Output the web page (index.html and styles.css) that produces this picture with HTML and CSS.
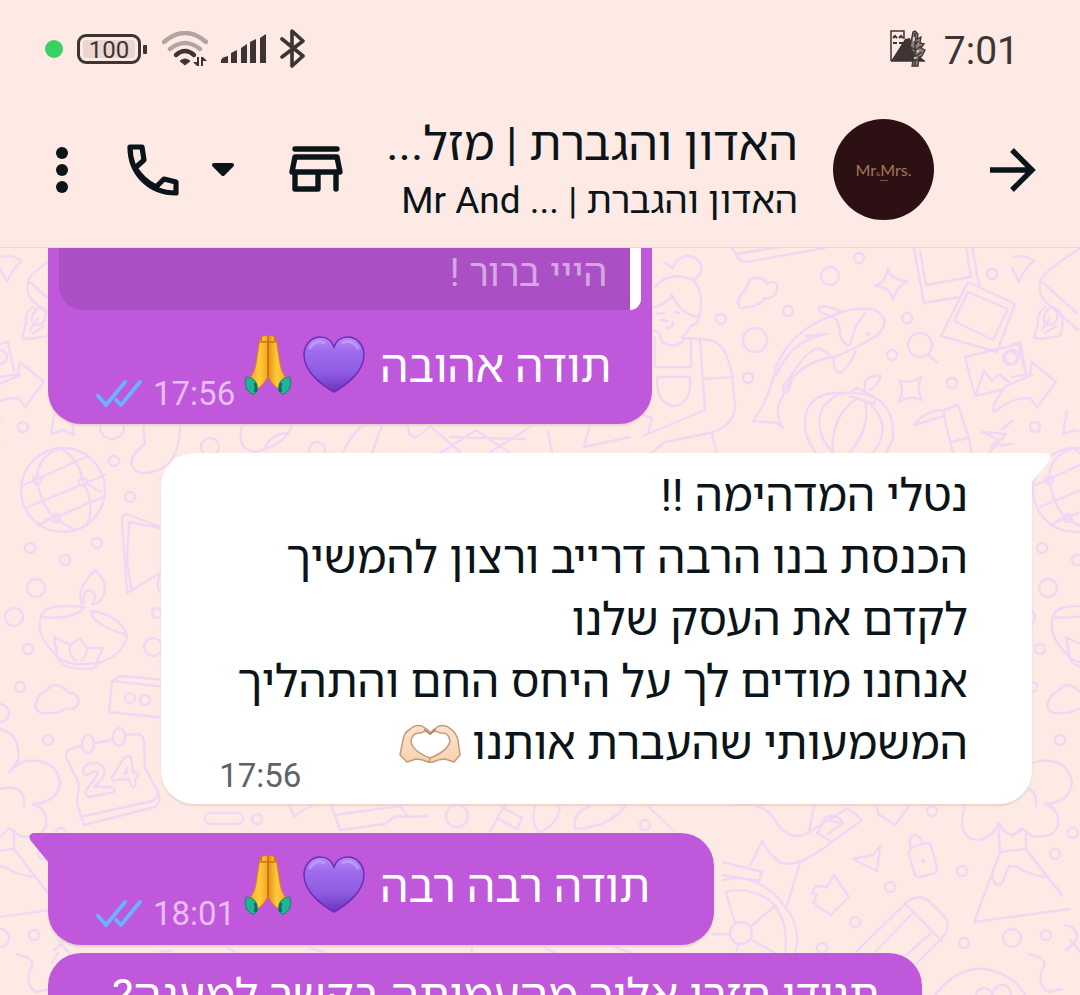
FILE: index.html
```html
<!DOCTYPE html>
<html lang="he" dir="rtl">
<head>
<meta charset="utf-8">
<meta name="viewport" content="width=device-width, initial-scale=1">
<title>האדון והגברת</title>
<link rel="stylesheet" href="styles.css">
</head>
<body>
<svg class="defs" width="0" height="0" aria-hidden="true">
  <defs>
    <linearGradient id="heartFill" x1="0" y1="0" x2="0" y2="1">
      <stop offset="0" stop-color="#b78af6"/><stop offset=".25" stop-color="#a06ced"/><stop offset=".65" stop-color="#8f5be3"/><stop offset="1" stop-color="#6a35b8"/>
    </linearGradient>
    <linearGradient id="palmL" x1="0" y1="0" x2="1" y2="0">
      <stop offset="0" stop-color="#f29d1f"/><stop offset=".55" stop-color="#ffcd3a"/><stop offset="1" stop-color="#f5a623"/>
    </linearGradient>
    <linearGradient id="palmR" x1="1" y1="0" x2="0" y2="0">
      <stop offset="0" stop-color="#f29d1f"/><stop offset=".55" stop-color="#ffcd3a"/><stop offset="1" stop-color="#e58e17"/>
    </linearGradient>
    <linearGradient id="skin" x1="0" y1="0" x2="0" y2="1">
      <stop offset="0" stop-color="#fbe3cf"/><stop offset="1" stop-color="#f8d3ae"/>
    </linearGradient>
    <symbol id="heart" viewBox="0 0 62 62">
      <path d="M31 58C24 54 1 40 1 21C1 10 9 3 17 3C24 3 29 7 31 13C33 7 38 3 45 3C53 3 61 10 61 21C61 40 38 54 31 58Z" fill="url(#heartFill)" stroke="#6d2db8" stroke-width="1.5"/>
      <path d="M7 14C10 8 16 6 21 9M40 9C45 6 52 8 55 14" fill="none" stroke="#d2b4fb" stroke-width="3" stroke-linecap="round" opacity=".5"/>
    </symbol>
    <symbol id="pray" viewBox="0 0 62 62">
      <path d="M31 3L31 42C29 47 25 52 19 56L11 46C16 41 18 36 19 29L23 5Q27-1 31 3Z" fill="url(#palmL)" stroke="#d9820f"/>
      <path d="M31 3L31 42C33 47 37 52 43 56L51 46C46 41 44 36 43 29L39 5Q35-1 31 3Z" fill="url(#palmR)" stroke="#d9820f"/>
      <path d="M24 8H38M24 3V8M38 3V8M31 3V42" fill="none" stroke="#c9700b" stroke-width="1.5"/>
      <path d="M9 43Q15 43 18 47Q21 53 20 57Q18 61 15 60L10 56Q7 49 9 43Z" fill="#22b496" stroke="#14806f"/>
      <path d="M53 43Q47 43 44 47Q41 53 42 57Q44 61 47 60L52 56Q55 49 53 43Z" fill="#22b496" stroke="#14806f"/>
      <path d="M18 49Q20 53 18 58M44 49Q42 53 44 58" fill="none" stroke="#0d6f63" stroke-width="3"/>
    </symbol>
    <symbol id="hands" viewBox="0 0 62 40">
      <path d="M32 10Q27 5 22 9Q13 8 12 17Q13 27 31 34L33 38L29 38Q23 35 17 35L8 38L1 31L4 16Q5 9 10 6Q16 0 23 2L29 6L32 10Z" fill="url(#skin)" stroke="#c59a7c" stroke-width="1.5" stroke-linejoin="round"/>
      <path d="M31 10Q36 5 41 9Q50 8 51 17Q49 27 31 34L30 38L34 38Q40 35 46 35L55 38L61 31L59 16Q57 9 53 6Q47 0 40 2L34 6L31 10Z" fill="url(#skin)" stroke="#c59a7c" stroke-width="1.5" stroke-linejoin="round"/>
      <path d="M25 5L31 10L37 5" fill="none" stroke="#b67f61" stroke-width="1.5"/>
    </symbol>
    <symbol id="ticks" viewBox="0 0 46 30">
      <path d="M2 17L10 26L29 3M20 21L25 26L44 3" fill="none" stroke="#69b4fd" stroke-width="3.8" stroke-linecap="round" stroke-linejoin="round"/>
    </symbol>
  </defs>
</svg>

<div class="screen">
  <header class="top">
    <div class="status">
      <span class="clock">7:01</span>
      <svg class="note" width="36" height="40" viewBox="0 0 36 40" aria-hidden="true">
        <path d="M1 32V2H14V10M1 32H35" fill="none" stroke="#3d3433" stroke-width="1.5"/>
        <path d="M1 32L15 10L20 9L24 22L35 32Z" fill="#3d3433"/>
        <path d="M3 9L5 7L7 9M9 9L11 7L13 9M3 14H7M9 14H13" fill="none" stroke="#3d3433" stroke-width="2"/>
        <path d="M25 2L28 5L27 10L31 8L30 14L34 15L31 19L35 21L32 27L29 28L28 37H22L24 25L20 18L22 8L23 3Z" fill="#8d8080" stroke="#3d3433" stroke-width="1.3"/>
        <path d="M25 4V36M28 12L25 16M31 17L26 21M32 23L26 27M21 18L25 21M23 31H28" fill="none" stroke="#3d3433" stroke-width="1.5"/>
        <path d="M24 8V12M28 21V23M24 29H26" stroke="#feeae4" stroke-width="1.5"/>
      </svg>
      <span class="push"></span>
      <svg width="26" height="40" viewBox="0 0 26 40" aria-hidden="true"><path d="M2 10L23 27L12 37V2L23 12L2 28" fill="none" stroke="#3d3433" stroke-width="3.6" stroke-linejoin="round" stroke-linecap="round"/></svg>
      <svg class="signal" width="46" height="30" viewBox="0 0 46 30" aria-hidden="true"><path d="M0 29V26Q1 23 7 22V29ZM10 29V19L16 16V29ZM20 29V14L26 10V29ZM29 29V8L35 5V29ZM39 29V4L45 0V29Z" fill="#3d3433"/></svg>
      <svg class="wifi" width="46" height="36" viewBox="0 0 46 36" aria-hidden="true">
        <path d="M2 11Q23-7 44 11M8 18Q23 6 38 18" fill="none" stroke="#b3a4a1" stroke-width="4.4" stroke-linecap="round"/>
        <path d="M14 24Q23 16 32 24" fill="none" stroke="#3d3433" stroke-width="4.4" stroke-linecap="round"/>
        <path d="M18 30Q23 26 28 30L23 34Z" fill="#3d3433" stroke="#3d3433" stroke-linejoin="round"/>
        <path d="M35 26V31H31L35 35H37V26ZM39 35V26H41L45 30H41V35Z" fill="#3d3433"/>
      </svg>
      <span class="battery">100</span>
      <span class="live"></span>
    </div>
    <div class="bar">
      <button class="icon back" type="button" aria-label="חזרה"><svg width="46" height="46" viewBox="0 0 46 46"><path d="M0 23H42M22 3L42 23L22 43" fill="none" stroke="#0b1418" stroke-width="5.4"/></svg></button>
      <div class="avatar"><span>Mr<small>&amp;</small>Mrs.</span><i></i></div>
      <div class="names">
        <h1>האדון והגברת | מזל...</h1>
        <p>האדון והגברת | <bdi dir="ltr">Mr And ...</bdi></p>
      </div>
      <button class="icon store" type="button" aria-label="חנות"><svg width="54" height="48" viewBox="0 0 54 48"><path d="M6 3H48M6 11H48L51 26H3ZM6 26V43H29V26M47 26V43" fill="none" stroke="#0b1418" stroke-width="5.4" stroke-linejoin="round" stroke-linecap="round"/></svg></button>
      <button class="icon call" type="button" aria-label="שיחה">
        <svg width="52" height="52" viewBox="0 0 52 52"><path d="M3 3H15L17 16L8 24C13 32 20 39 29 43L37 35L49 38V49C22 49 3 29 3 3Z" fill="none" stroke="#0b1418" stroke-width="5.2" stroke-linejoin="round"/></svg>
        <svg width="24" height="16" viewBox="0 0 24 16"><path d="M3 3H21L12 12Z" fill="#0b1418" stroke="#0b1418" stroke-width="4" stroke-linejoin="round"/></svg>
      </button>
      <button class="icon" type="button" aria-label="תפריט"><svg width="12" height="46" viewBox="0 0 12 46"><g fill="#0b1418"><circle cx="6" cy="6" r="6"/><circle cx="6" cy="23" r="6"/><circle cx="6" cy="40" r="6"/></g></svg></button>
    </div>
  </header>

  <main class="chat">
    <svg class="doodles" aria-hidden="true">
      <defs>
        <g id="edge">
          <circle cx="63" cy="490" r="42"/>
          <path d="M24 485L88 456M28 507L105 475M38 525L103 497M62 448Q36 455 37 482Q43 508 54 518L75 530M62 448Q80 462 83 482Q96 505 87 526M55 516Q48 518 39 526M88 484L101 492"/>
          <circle cx="37" cy="480" r="4"/><circle cx="83" cy="482" r="4"/><circle cx="56" cy="518" r="4"/>
          <circle cx="30" cy="548" r="5"/><circle cx="65" cy="560" r="5"/><circle cx="97" cy="543" r="5"/><circle cx="36" cy="588" r="9"/><circle cx="14" cy="617" r="9"/><circle cx="28" cy="649" r="5"/><circle cx="20" cy="687" r="5"/><circle cx="48" cy="740" r="5"/><circle cx="0" cy="713" r="9"/>
          <path d="M84 607Q76 620 41 617Q35 635 55 654Q65 668 98 663Q125 655 127 635Q118 614 91 611M41 617Q42 603 84 607M91 611Q92 625 127 635M57 657Q61 670 92 669L97 664M57 655L54 637L70 645L80 638L87 648L103 648L97 661M70 645Q68 655 76 661M87 648Q86 658 81 661M82 604Q75 590 95 570Q109 583 103 597Q99 604 92 604M84 602Q82 591 90 590Q98 593 93 604"/>
          <path d="M42 713Q30 709 40 695Q47 690 48 689Q53 681 65 689Q68 694 73 693Q84 700 74 709Q66 707 62 711Q53 714 42 713Z"/>
          <path d="M0 729Q21 734 18 760L9 773Q20 758 38 761Q58 763 60 784Q56 803 33 804Q48 809 46 825Q42 839 20 836M0 789Q26 783 24 806M20 836L9 828L0 837M14 830V849L49 895M-14 823L-12 852L14 849M-12 852L-38 922L58 909M14 849L50 895M-20 874Q-18 889-10 883L-3 866L5 867Q15 874 32 877"/>
          <circle cx="0" cy="938" r="9"/><circle cx="34" cy="935" r="5"/><circle cx="43" cy="854" r="5"/><circle cx="61" cy="833" r="5"/>
          <path d="M17 954L29 958Q35 964 30 970Q25 985 36 992L50 989M53 925Q66 927 65 939L55 950M58 940L67 950M54 950L62 944L71 956"/>
          <path d="M2 257Q12 254 22 261Q13 267 7 282L0 268M70 247Q26 275 28 283Q26 295 34 302L66 330M30 282L65 313M34 307Q25 311 26 323L22 338L29 339L48 336Q55 315 43 308Q38 306 34 312Q28 323 37 325Q47 323 45 315M30 330L38 318M33 333L44 326"/>
          <path d="M0 344L8 342L14 371M0 377L18 374L20 362L44 382L25 407L18 398Q0 397-18 412Q-22 407-6 386L20 375"/>
          <circle cx="0" cy="357" r="7"/><circle cx="23" cy="427" r="5"/><path d="M55 411L51 434L63 430L74 435L70 412M0 421L-10 429M0 444L-21 446L-13 440L-30 432L-6 434L-25 455"/>
        </g>
      </defs>
      <g class="ink" transform="translate(0 -248)">
        <use href="#edge"/><use href="#edge" x="1012"/>
        <path d="M143 424L145 444Q129 455 132 466Q137 476 152 472Q180 467 180 424M242 425Q236 450 255 452Q287 444 292 425M265 450Q268 434 288 433M343 453Q350 435 364 424M372 453L382 425M408 426Q410 448 430 426M440 453L476 430L510 453M450 437L525 439M430 426L460 452M490 452L535 424M548 432L552 452M590 424L584 447L630 437"/>
        <circle cx="112" cy="427" r="12"/><circle cx="114" cy="461" r="5"/><circle cx="210" cy="447" r="9"/><circle cx="317" cy="450" r="8"/><circle cx="130" cy="497" r="5"/>
        <path d="M165 529L127 514Q122 514 122 520L127 593L165 570M129 522L165 529M129 522L127 560L131 588M160 573Q155 590 162 594M165 680L120 676L112 681L109 712L165 718M112 681L165 687"/>
        <circle cx="130" cy="698" r="5"/><circle cx="145" cy="700" r="5"/><circle cx="157" cy="613" r="5"/><circle cx="153" cy="647" r="9"/>
        <path d="M82 746L70 749Q65 752 66 757L79 784M95 743L112 740M125 735L139 734Q144 736 144 743L145 768M79 784L77 803L84 825L155 807Q161 802 159 794L145 768M80 817L152 801Q158 798 158 791"/>
        <ellipse cx="88" cy="744" rx="6" ry="9"/><ellipse cx="119" cy="737" rx="6" ry="9"/>
        <path d="M83 773Q83 763 94 763Q110 765 102 779L94 787H113Q118 792 109 793L89 797Q83 794 87 789L98 774Q96 769 91 773Q86 777 83 773ZM124 758L112 777Q110 782 117 780L129 779L131 786Q137 790 135 778Q142 775 135 772L133 773L131 757Q126 755 124 758M124 774L127 768V773Z"/>
        <rect x="205" y="813" width="38" height="11" rx="5"/><circle cx="257" cy="819" r="5"/>
        <path d="M290 806L294 817L303 810L312 806M331 806L335 815L400 806M335 815L340 830L385 824Q396 813 405 817L427 816M400 806L407 815"/>
        <circle cx="457" cy="816" r="11"/><path d="M505 806L497 818L517 829L522 818L502 807M498 818L490 832M535 806Q530 823 540 833Q559 822 560 806M575 829Q572 812 590 806M575 829Q610 827 625 806M648 806L675 832"/><circle cx="645" cy="825" r="5"/>
        <path d="M655 287Q669 270 693 280Q702 289 701 306L699 318Q698 324 691 326Q687 333 682 337L684 340Q675 350 662 342L659 333L653 330M694 280Q708 269 696 258Q680 251 673 268L664 262M652 308Q669 303 672 295Q680 313 697 317M656 314L664 313M675 312L679 313M661 320L667 321M667 328Q673 328 673 322M655 337V367H691V338M700 338L705 410L643 436M685 338L710 340Q726 343 732 375L735 407Q734 426 710 433L665 442L650 454M704 379L733 377M657 377H690Q692 405 673 406Q656 403 657 377M712 434L717 454M640 414L652 418L648 433"/>
        <path d="M731 247L740 260Q743 263 752 261L825 248M736 254L780 247M740 308Q735 300 744 292L750 279Q763 275 767 284Q779 278 777 291Q774 299 765 298Q760 306 749 307Z"/>
        <circle cx="859" cy="258" r="5"/><circle cx="830" cy="276" r="9"/><circle cx="721" cy="319" r="5"/><circle cx="788" cy="311" r="5"/><circle cx="755" cy="340" r="12"/><circle cx="748" cy="378" r="5"/><circle cx="892" cy="355" r="5"/><circle cx="907" cy="318" r="5"/><circle cx="992" cy="274" r="5"/><circle cx="952" cy="383" r="5"/>
        <path d="M888 268Q890 280 907 281Q896 288 893 300Q890 286 875 286Q887 281 888 268ZM899 380Q910 385 921 377Q916 389 922 400Q911 395 899 402Q905 390 899 380Z"/>
        <path d="M832 316Q855 305 875 310Q894 321 875 337Q840 357 828 358Q793 365 782 398Q773 410 783 428L777 423L753 421Q768 402 776 367Q791 330 832 316M834 316Q817 314 819 307Q827 305 842 312M776 376Q790 340 827 334L805 336M832 316Q840 320 840 335Q844 346 850 345L855 328L865 313M791 376Q807 350 819 348L830 355M791 376Q780 388 784 392Q790 395 792 374M834 357Q832 371 840 373Q848 369 856 351"/><circle cx="868" cy="334" r="1"/>
        <path d="M817 454Q800 434 807 410Q815 391 847 393Q895 391 893 438L886 454M833 453Q812 430 823 407Q833 394 847 393M833 454Q830 417 856 399M848 454Q871 430 865 400M868 402Q895 426 872 454M850 393L857 388L875 397L874 404L850 396M865 390Q862 376 880 375Q882 381 870 390"/>
        <path d="M914 248L924 303L960 297M972 247L979 285M920 251L926 285L971 277L966 248M968 282L1015 304L997 352L941 336ZM968 292L1008 309L993 340L954 321ZM965 357L1018 344L1026 375M965 357L975 396L1001 390M976 394L984 371L992 381L999 374L1010 383"/><circle cx="1010" cy="358" r="7"/><circle cx="920" cy="345" r="12"/><path d="M929 355L937 363M914 425Q925 410 944 410L958 405L969 438L972 454M914 425L944 416L953 453M944 410V416M951 442L968 438"/>
        <path d="M735 805Q766 801 777 824Q792 843 809 832L848 808L862 820L832 842L817 833L825 820L843 823L828 834M809 832L814 806M832 842Q796 870 779 862Q766 850 762 841L750 866M800 863L787 905M824 819Q833 811 843 822M723 862L762 872L759 881L723 875M723 880Q762 870 791 915Q801 935 795 953M725 892Q746 886 768 899Q790 918 785 953M726 893L735 923M750 927L776 905M752 940L775 953M738 945L736 953M713 934H730"/><circle cx="741" cy="933" r="11"/>
        <path d="M877 806L878 814L895 825L909 806M853 859L873 855L880 846L877 871ZM812 893L815 886L827 887L834 875L849 897L831 915L820 908L813 902L817 895ZM856 952L908 901Q920 893 930 902L945 917Q950 925 945 935L914 966M904 903L942 941M912 914L875 952M930 934L903 958"/><path d="M909 855Q907 849 915 846L926 843Q931 843 932 849L937 868Q938 873 932 874L920 877Q915 877 914 872ZM911 850Q907 838 914 835Q922 835 922 844"/><circle cx="923" cy="861" r="1"/><circle cx="932" cy="811" r="5"/><circle cx="890" cy="887" r="5"/><circle cx="962" cy="871" r="5"/><circle cx="855" cy="922" r="5"/><circle cx="964" cy="943" r="5"/><circle cx="822" cy="948" r="5"/>
        <path d="M965 806Q955 840 980 840Q994 836 999 823Q1007 842 1023 829M935 995Q960 963 990 970Q1015 976 1025 995"/><circle cx="984" cy="996" r="8"/><circle cx="1002" cy="994" r="9"/>
        <path d="M58 953L52 963M160 952L170 951M224 945L236 953M310 948L325 953M472 947V954M540 945L555 953M610 945L632 953"/>
      </g>
    </svg>

    <article class="msg out first">
      <blockquote class="quote">הייי ברור !</blockquote>
      <div class="line">
        <p>תודה אהובה</p>
        <span class="emoji"><svg role="img" aria-label="💜"><use href="#heart"/></svg><svg role="img" aria-label="🙏"><use href="#pray"/></svg></span>
        <span class="meta"><time>17:56</time><svg class="ticks" role="img" aria-label="נקרא"><use href="#ticks"/></svg></span>
      </div>
    </article>

    <article class="msg in">
      <svg class="tail" width="20" height="32" viewBox="0 0 20 32" aria-hidden="true"><path d="M0 0H16Q22 2 18 8L0 30Z" fill="#fff"/></svg>
      <p>נטלי המדהימה !!<br>הכנסת בנו הרבה דרייב ורצון להמשיך<br>לקדם את העסק שלנו<br>אנחנו מודים לך על היחס החם והתהליך<br>המשמעותי שהעברת אותנו <svg class="hands" role="img" aria-label="🫶🏻"><use href="#hands"/></svg></p>
      <time>17:56</time>
    </article>

    <article class="msg out tailed">
      <svg class="tail" width="20" height="32" viewBox="0 0 20 32" aria-hidden="true"><path d="M20 0H4Q-2 2 2 8L20 30Z" fill="#c058dc"/></svg>
      <div class="line">
        <p>תודה רבה רבה</p>
        <span class="emoji"><svg role="img" aria-label="💜"><use href="#heart"/></svg><svg role="img" aria-label="🙏"><use href="#pray"/></svg></span>
        <span class="meta"><time>18:01</time><svg class="ticks" role="img" aria-label="נקרא"><use href="#ticks"/></svg></span>
      </div>
    </article>

    <article class="msg out last">
      <p>תגידו חזרו אליך מהעמותה בקשר למענה?</p>
    </article>
  </main>
</div>
</body>
</html>
```
FILE: styles.css
```css
* { box-sizing: border-box; }
body {
  margin: 0;
  background: #feeae4;
  color: #0b1418;
  font-family: Roboto, "Noto Sans Hebrew", "Open Sans", sans-serif;
}
svg { display: block; flex: none; }
h1, p, blockquote { margin: 0; font-weight: 400; }
.defs { position: absolute; }
.screen { height: 100vh; display: flex; flex-direction: column; overflow: hidden; }

.top { flex: none; border-bottom: 1px solid #ecd9d2; background: #feeae4; }
.status {
  display: flex;
  align-items: center;
  height: 98px;
  padding: 0 61px 0 45px;
  color: #3d3433;
}
.clock { padding-top: 4px; font-size: 39px; }
.note { margin-right: 18px; }
.push { flex: 1; }
.signal { margin-right: 13px; }
.wifi { margin-right: 13px; }
.battery {
  position: relative;
  width: 64px;
  height: 30px;
  margin: 0 21px 0 14px;
  border: 3px solid #3d3433;
  border-radius: 9px;
  background: #ead7d3;
  box-shadow: inset 0 0 0 3px #feeae4;
  font-size: 24px;
  line-height: 26px;
  text-align: center;
}
.battery::after {
  content: "";
  position: absolute;
  left: 63px;
  top: 8px;
  width: 4px;
  height: 9px;
  border-radius: 1px;
  background: #3d3433;
}
.live { width: 18px; height: 18px; border-radius: 50%; background: #38d163; }

.bar { display: flex; align-items: center; height: 149px; padding: 0 44px 6px 56px; }
.icon { display: flex; align-items: center; padding: 0; border: 0; background: none; }
.avatar {
  position: relative;
  display: grid;
  place-items: center;
  flex: none;
  width: 101px;
  height: 101px;
  margin: 0 56px 0 35px;
  border-radius: 50%;
  background: #2d1013;
  color: #a17a57;
  direction: ltr;
  font: 16px Lato, sans-serif;
}
.avatar small { font-size: 6px; }
.avatar i { position: absolute; top: 61px; width: 8px; height: 1px; background: #765741; }
.names { flex: 1; min-width: 0; padding-top: 4px; white-space: nowrap; }
.names h1 { font-size: 47px; line-height: 59px; }
.names p { font-size: 37px; line-height: 56px; }
.store { margin-left: 54px; }
.call { gap: 32px; flex-direction: row-reverse; margin-left: 59px; }

.chat {
  position: relative;
  flex: 1;
  display: flex;
  flex-direction: column;
  align-items: flex-start;
  min-height: 0;
  padding: 0 48px;
  overflow: hidden;
}
.doodles { position: absolute; inset: 0; width: 100%; height: 100%; }
.ink { fill: none; stroke: #f0d8f5; stroke-width: 2.4; stroke-linejoin: round; stroke-linecap: round; }
.msg {
  position: relative;
  flex: none;
  border-radius: 33px;
  font-size: 45px;
  line-height: 62px;
  box-shadow: 0 2px 2px #e6d3cb;
}
.out { align-self: flex-end; background: #c058dc; color: #fff; }
.in { align-self: flex-start; background: #fff; }
.first { border-radius: 0 0 33px 33px; padding: 0 11px 26px; }
.quote {
  height: 62px;
  padding: 0 23px;
  border-right: 11px solid #fff;
  border-radius: 0 0 11px 24px;
  background: #aa4fc4;
  color: #d5a7e2;
  font-size: 38px;
  line-height: 50px;
}
.line { display: flex; align-items: center; }
.first .line { padding: 22px 30px 0 37px; }
.line p { padding-top: 4px; white-space: nowrap; }
.emoji { display: flex; gap: 4px; margin: 0 15px 0 2px; }
.emoji svg { width: 62px; height: 62px; }
.meta { display: flex; align-items: center; align-self: flex-end; gap: 11px; margin-bottom: -15px; }
.ticks { width: 46px; height: 30px; }
time { color: #e9bdf5; font: 33px/38px Roboto, sans-serif; }
.tail { position: absolute; top: 0; }
.in .tail { right: -19px; }
.out .tail { left: -19px; }
.in { margin-top: 29px; border-top-right-radius: 0; padding: 12px 64px 9px 58px; }
.in p { padding-left: 18px; }
.in time { display: block; margin-top: -18px; color: #5c6468; text-align: left; direction: ltr; }
.hands { display: inline-block; width: 62px; height: 40px; vertical-align: -5px; }
.tailed { margin-top: 29px; border-top-left-radius: 0; padding: 19px 64px 27px 48px; }
.last { margin-top: 8px; padding: 12px 42px 40px 64px; }
```
